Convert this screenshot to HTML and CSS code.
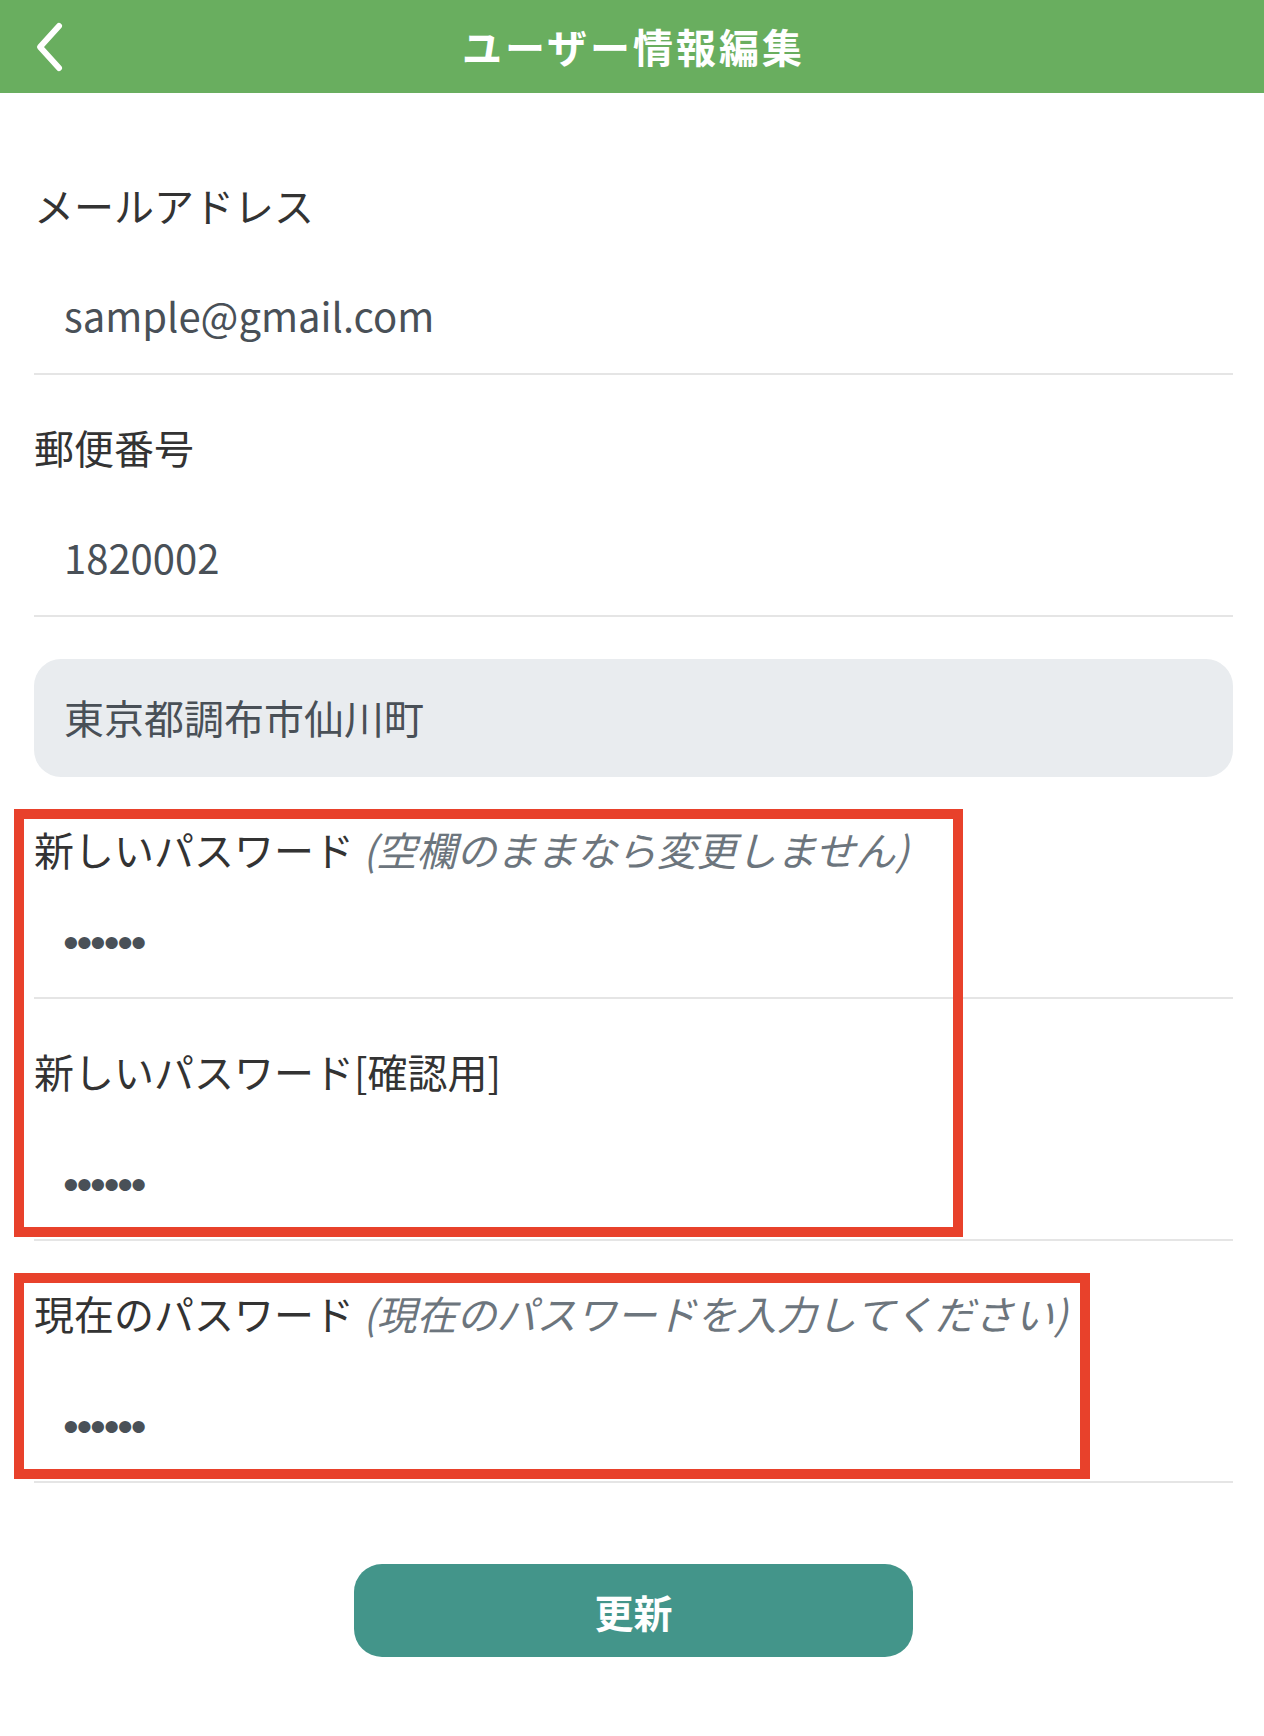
FILE: index.html
```html
<!DOCTYPE html>
<html lang="ja">
<head>
    <meta charset="utf-8">
    <title>ユーザー情報編集</title>
    <link rel="stylesheet" href="styles.css">
</head>
<body>
    <header class="app-header">
        <a class="back-link" href="#" aria-label="戻る">
            <svg width="40" height="56" viewBox="0 0 40 56">
                <polyline points="31,6 12,27 31,48" fill="none" stroke="#fff" stroke-width="6" stroke-linecap="round" stroke-linejoin="round"/>
            </svg>
        </a>
        <h1>ユーザー情報編集</h1>
    </header>

    <main class="page">
        <form class="edit-form" id="editForm">
            <div class="form-group">
                <label for="email">メールアドレス</label>
                <input type="email" id="email" name="email" class="form-control" value="sample@gmail.com">
            </div>

            <div class="form-group">
                <label for="zip">郵便番号</label>
                <input type="text" id="zip" name="zip" class="form-control" value="1820002">
            </div>

            <div class="form-group">
                <input type="text" id="address" name="address" class="form-control readonly" value="東京都調布市仙川町" disabled>
            </div>

            <!-- 新しいパスワード -->
            <div class="mark mark-short">
                <div class="form-group tight">
                    <label for="newPassword">新しいパスワード <small class="hint">(空欄のままなら変更しません)</small></label>
                    <input type="password" id="newPassword" name="newPassword" class="form-control password" value="123456">
                </div>
                <div class="form-group">
                    <label for="newPasswordConfirm">新しいパスワード[確認用]</label>
                    <input type="password" id="newPasswordConfirm" name="newPasswordConfirm" class="form-control password" value="123456">
                </div>
            </div>

            <!-- 現在のパスワード -->
            <div class="mark mark-wide">
                <div class="form-group">
                    <label for="currentPassword">現在のパスワード <small class="hint">(現在のパスワードを入力してください)</small></label>
                    <input type="password" id="currentPassword" name="currentPassword" class="form-control password" value="123456">
                </div>
            </div>

            <button type="submit" class="submit-btn">更新</button>
        </form>
    </main>
</body>
</html>
```

FILE: styles.css
```css
body {
    margin: 0;
    padding: 0;
    background-color: #fff;
    font-family: "Noto Sans CJK JP", "Noto Sans", sans-serif;
    color: #333;
}

.app-header {
    position: relative;
    height: 93px;
    background-color: #69ae5f;
    display: flex;
    align-items: center;
    justify-content: center;
}

.back-link {
    position: absolute;
    left: 28px;
    top: 20px;
    display: block;
    line-height: 0;
}

.app-header h1 {
    margin: 0 0 2px;
    color: #fff;
    font-size: 40px;
    font-weight: bold;
    letter-spacing: 3px;
    line-height: 1;
    padding-left: 3px;
}

.page {
    padding: 82px 31px 0 34px;
}

.edit-form {
    display: flex;
    flex-direction: column;
    gap: 42px;
}

.form-group label {
    display: block;
    font-size: 40px;
    line-height: 60px;
    margin-bottom: 22px;
    color: #333;
    white-space: nowrap;
}

.form-group.tight label {
    margin-bottom: 2px;
}

.hint {
    font-size: 40px;
    font-style: italic;
    color: #6c757d;
}

.form-control {
    display: block;
    width: 100%;
    height: 118px;
    box-sizing: border-box;
    margin: 0;
    padding: 0 30px;
    border: none;
    border-bottom: 2px solid #e5e5e5;
    background: transparent;
    font-family: "Noto Sans CJK JP", "Noto Sans", sans-serif;
    font-size: 40px;
    color: #495057;
    outline: none;
}

.form-control.readonly {
    background-color: #e9ecef;
    border-bottom-color: transparent;
    border-radius: 27px;
    color: #495057;
    -webkit-text-fill-color: #495057;
    opacity: 1;
}

.form-control.password {
    padding: 8px 30px 0 29px;
    font-family: "Liberation Sans", Arial, sans-serif;
    font-size: 45px;
    letter-spacing: -2.2px;
}

.mark {
    position: relative;
    display: flex;
    flex-direction: column;
    gap: 42px;
}

.mark::after {
    content: "";
    position: absolute;
    top: -10px;
    bottom: 4px;
    left: -20px;
    border: 10px solid #e8412b;
    box-sizing: border-box;
    pointer-events: none;
}

.mark-short::after {
    width: 949px;
}

.mark-wide::after {
    width: 1076px;
}

.submit-btn {
    align-self: center;
    margin: 39px 0 79px;
    width: 559px;
    height: 93px;
    border: none;
    border-radius: 28px;
    background-color: #43958a;
    color: #fff;
    font-family: "Noto Sans CJK JP", sans-serif;
    font-size: 39px;
    font-weight: bold;
    cursor: pointer;
}
```
